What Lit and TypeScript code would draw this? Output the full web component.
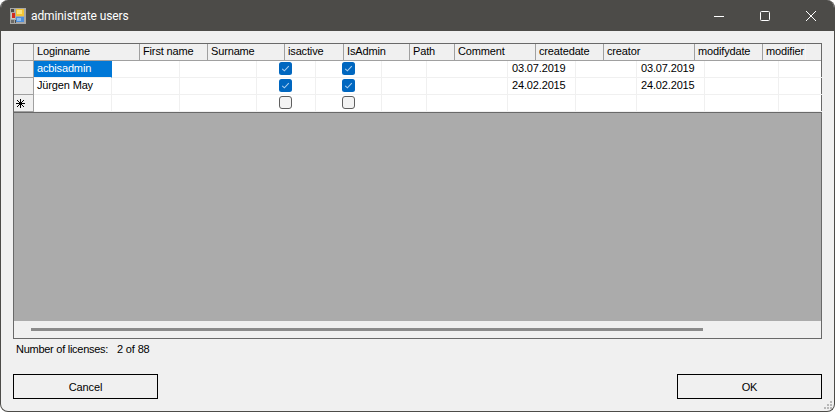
import { LitElement, html, css, svg } from "lit";
import { customElement } from "lit/decorators.js";

const headers: [string, number][] = [
  ["Loginname", 106], ["First name", 68], ["Surname", 77], ["isactive", 59], ["IsAdmin", 66],
  ["Path", 45], ["Comment", 81], ["createdate", 68], ["creator", 91], ["modifydate", 68], ["modifier", 43],
];
const colWidths = [78, 68, 77, 59, 66, 45, 81, 68, 61, 68, 74, 44];

type Row = { marker?: boolean; cells: (string | boolean)[] };
const rows: Row[] = [
  { cells: ["acbisadmin", "", "", true, true, "", "", "03.07.2019", "", "03.07.2019", "", ""] },
  { cells: ["Jürgen May", "", "", true, true, "", "", "24.02.2015", "", "24.02.2015", "", ""] },
  { marker: true, cells: ["", "", "", false, false, "", "", "", "", "", "", ""] },
];

@customElement("app-root")
export class AppRoot extends LitElement {
  static styles = css`
    :host { display: block; width: 835px; height: 412px; background: #fff; font-family: "Liberation Sans", Arial, sans-serif; font-size: 11px; letter-spacing: -0.15px; color: #000; }
    .window { position: relative; box-sizing: border-box; width: 835px; height: 412px; display: flex; flex-direction: column; background: #f0f0f0; border: 1px solid #4c4b48; border-top: 0; border-radius: 8px; overflow: hidden; }
    .title { flex: none; height: 31px; margin: 0 -1px; background: #4c4b48; display: flex; align-items: center; padding: 0 1px 0 10px; color: #fff; font-family: Roboto, "Open Sans", sans-serif; font-size: 12px; letter-spacing: -0.1px; }
    .app-icon { display: block; margin-right: 5px; }
    .label { flex: 1; }
    .ctrl { width: 46px; height: 31px; display: flex; align-items: center; justify-content: center; }
    .content { flex: 1; display: flex; flex-direction: column; padding: 12px; }
    .grid { box-sizing: border-box; height: 296px; border: 1px solid #696969; display: flex; flex-direction: column; background: #ababab; }
    .head { flex: none; height: 16px; display: flex; background: #f0f0f0; border-bottom: 1px solid #a0a0a0; }
    .corner { box-sizing: border-box; flex: none; width: 20px; border-right: 1px solid #a0a0a0; }
    .hcell { box-sizing: border-box; flex: none; border-right: 1px solid #a0a0a0; padding-left: 3px; line-height: 15px; white-space: nowrap; overflow: hidden; }
    .hcell.last { border-right: 1px solid #f5f5f5; }
    .row { flex: none; height: 17px; display: flex; background: #fff; }
    .rowhead { box-sizing: border-box; flex: none; width: 20px; background: #f0f0f0; border-right: 1px solid #a0a0a0; border-bottom: 1px solid #a0a0a0; display: flex; align-items: center; padding-left: 2px; }
    .cell { box-sizing: border-box; flex: none; border-right: 1px solid #f0f0f0; border-bottom: 1px solid #f0f0f0; line-height: 14px; padding: 0 1px 0 3px; white-space: nowrap; overflow: hidden; }
    .cell.date { padding-left: 4px; }
    .cell.center { display: flex; justify-content: center; align-items: center; padding: 0 1px 1px 0; }
    .cell.sel { background: #0078d7; color: #fff; border-right-color: #0078d7; border-bottom-color: #f0f0f0; }
    .fill { flex: 1; background: #ababab; border-top: 1px solid #696969; }
    .hscroll { flex: none; height: 17px; background: #f0f0f0; display: flex; align-items: center; padding-left: 17px; }
    .thumb { width: 672px; height: 3px; background: #8b8b8b; }
    .status { flex: none; display: flex; height: 20px; align-items: center; padding-left: 3px; }
    .status .k { width: 101px; letter-spacing: -0.27px; }
    .buttons { flex: none; display: flex; justify-content: space-between; margin-top: 15px; }
    .btn { box-sizing: border-box; width: 145px; height: 25px; border: 1px solid #000; background: #f0f0f0; display: flex; align-items: center; justify-content: center; }
    .grip { position: absolute; right: 0; bottom: 0; display: block; }
  `;

  private renderIcon() {
    return html`<svg class="app-icon" width="16" height="16" viewBox="0 0 16 16" shape-rendering="crispEdges">
      <rect x="0" y="0" width="16" height="16" fill="#a9a8a5"/>
      <rect x="1" y="1" width="3" height="3" fill="#4c4b48"/><rect x="1" y="12" width="3" height="3" fill="#6c6b68"/>
      <rect x="5" y="12" width="1" height="3" fill="#4c4b48"/>
      <rect x="1" y="5" width="4" height="6" fill="#c8c8c4"/>
      <rect x="2" y="5" width="3" height="5" fill="#d22a20"/>
      <rect x="6" y="1" width="8" height="7" fill="#f3c534"/><rect x="7" y="2" width="5" height="4" fill="#fbe27c"/>
      <rect x="6" y="9" width="8" height="5" fill="#4f8fdb"/><rect x="7" y="10" width="4" height="3" fill="#8fbdee"/>
    </svg>`;
  }

  private renderCell(v: string | boolean, w: number, sel: boolean) {
    if (typeof v === "boolean") {
      return html`<div class="cell center" style="width:${w}px">
        <svg width="13" height="13" viewBox="0 0 13 13">
          ${v
            ? svg`<rect width="13" height="13" rx="2.5" fill="#0067c0"/><path d="M3.2 6.8 5.4 8.8 9.8 4.2" fill="none" stroke="#a9cdee" stroke-width="1.1"/>`
            : svg`<rect x=".5" y=".5" width="12" height="12" rx="2.5" fill="#f3f3f3" stroke="#5f5f5f"/>`}
        </svg></div>`;
    }
    const isDate = /^\d\d\./.test(v);
    return html`<div class="cell ${isDate ? "date" : ""} ${sel ? "sel" : ""}" style="width:${w}px">${v}</div>`;
  }

  render() {
    return html`<div class="window">
      <div class="title">
        ${this.renderIcon()}
        <span class="label">administrate users</span>
        <div class="ctrl"><svg width="10" height="10" viewBox="0 0 10 10"><path d="M0 5.5H10" stroke="#fff"/></svg></div>
        <div class="ctrl"><svg width="10" height="10" viewBox="0 0 10 10"><rect x=".5" y=".5" width="9" height="9" rx="1" fill="none" stroke="#fff"/></svg></div>
        <div class="ctrl"><svg width="10" height="10" viewBox="0 0 10 10"><path d="M0 0 10 10M10 0 0 10" stroke="#fff" stroke-width="1"/></svg></div>
      </div>
      <div class="content">
        <div class="grid">
          <div class="head">
            <div class="corner"></div>
            ${headers.map(([t, w], i) => html`<div class="hcell ${i === headers.length - 1 ? "last" : ""}" style="width:${w}px">${t}</div>`)}
          </div>
          ${rows.map((r, ri) => html`<div class="row">
            <div class="rowhead">${r.marker ? html`<svg width="9" height="9" viewBox="0 0 9 9"><path d="M4.5 0V9M0 4.5H9M1 1 8 8M8 1 1 8" stroke="#000" stroke-width="1"/></svg>` : ""}</div>
            ${colWidths.map((w, i) => this.renderCell(r.cells[i], w, ri === 0 && i === 0))}
          </div>`)}
          <div class="fill"></div>
          <div class="hscroll"><div class="thumb"></div></div>
        </div>
        <div class="status"><span class="k">Number of licenses:</span><span>2 of 88</span></div>
        <div class="buttons">
          <div class="btn">Cancel</div>
          <div class="btn">OK</div>
        </div>
      </div>
      <svg class="grip" width="11" height="11" viewBox="0 0 11 11" shape-rendering="crispEdges" fill="#b8b8b8">
        <rect x="7" y="1" width="2" height="2"/><rect x="4" y="4" width="2" height="2"/><rect x="7" y="4" width="2" height="2"/>
        <rect x="1" y="7" width="2" height="2"/><rect x="4" y="7" width="2" height="2"/><rect x="7" y="7" width="2" height="2"/>
      </svg>
    </div>`;
  }
}
